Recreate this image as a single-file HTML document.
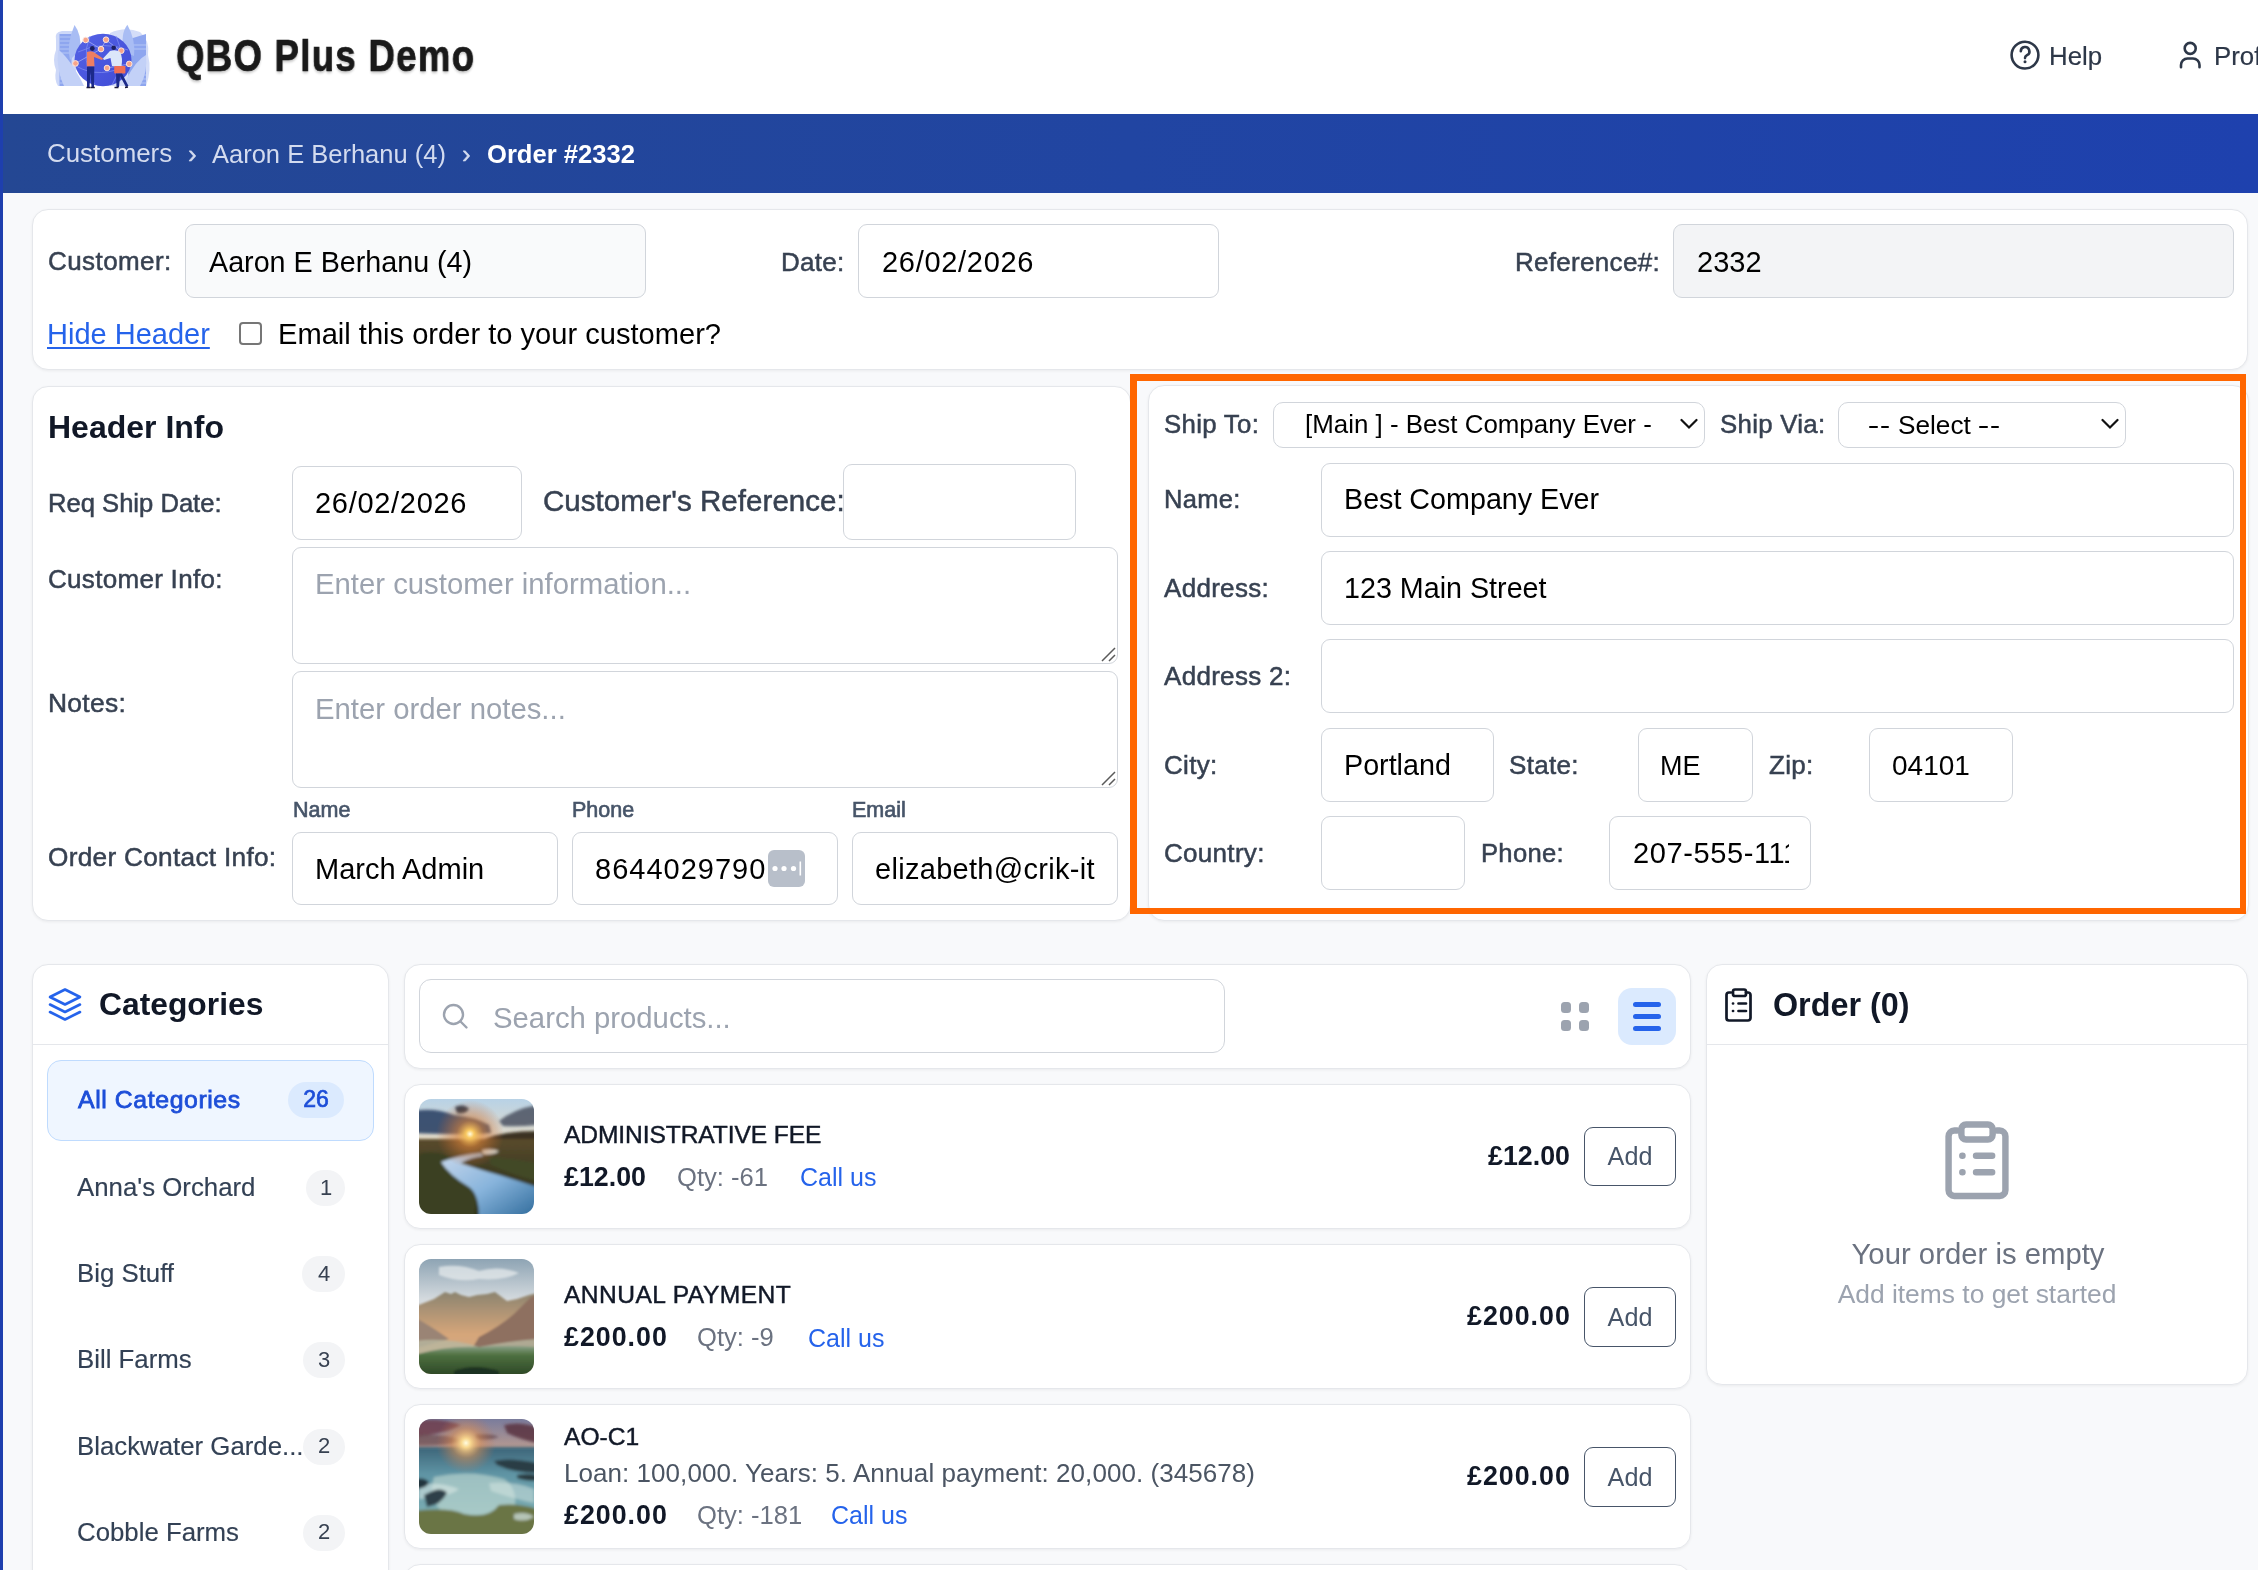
<!DOCTYPE html>
<html><head><meta charset="utf-8"><title>QBO Plus Demo - Order</title>
<style>
html,body{margin:0;padding:0;}
body{width:2258px;height:1570px;overflow:hidden;position:relative;background:#f8f9fb;font-family:"Liberation Sans",sans-serif;}
.t{position:absolute;line-height:1;white-space:nowrap;will-change:transform;}
.b{position:absolute;box-sizing:border-box;}
</style></head><body>
<div class="b" style="left:0px;top:0px;width:2258px;height:114px;background:#fff;"></div>
<div class="b" style="left:0px;top:114px;width:2258px;height:79px;background:linear-gradient(90deg,#244793 0%,#2145a2 50%,#1e41ae 100%);"></div>
<div class="b" style="left:0px;top:0px;width:3px;height:1570px;background:#1e3fae;z-index:50;"></div>
<svg class="b" style="left:50px;top:15px" width="105" height="80" viewBox="50 15 105 80">
<defs><linearGradient id="gl" x1="0" y1="0" x2="1" y2="1"><stop offset="0" stop-color="#5563e6"/><stop offset="1" stop-color="#3f4bd6"/></linearGradient></defs>
<path d="M56 40 Q54 32 62 31 L76 31 L76 86 L58 86 Q54 80 56 70 Q52 60 56 50 Z" fill="#cdd8f8"/>
<path d="M110 33 Q125 26 140 32 Q150 40 148 55 Q152 70 146 86 L110 86 Z" fill="#d4ddf8"/>
<rect x="59.5" y="34" width="12" height="52" fill="#8ea6ef"/>
<path d="M59.5 37 h12 M59.5 41 h12 M59.5 45 h12 M59.5 49 h12 M59.5 53 h12 M59.5 71 h12 M59.5 75 h12 M59.5 79 h12 M59.5 83 h12" stroke="#b4c6f6" stroke-width="1.2"/>
<path d="M128 39.5 L146 34 L146 86 L128 86 Z" fill="#8ea6ef"/>
<path d="M128 45 h18 M128 49 h18 M128 75 h18 M128 79 h18 M128 83 h18" stroke="#b4c6f6" stroke-width="1.2"/>
<path d="M74.5 25 Q82 35 80 50 L70 60 Q66 45 74.5 25 Z" fill="#a9bdf4"/>
<path d="M127.4 24.7 Q120 34 124 52 L134 56 Q136 40 127.4 24.7 Z" fill="#a9bdf4"/>
<path d="M58 50 Q66 54 80 78 L84 86 L64 86 Q56 70 58 50 Z" fill="#c3d1f7"/>
<path d="M146 55 Q136 60 126 80 L124 86 L140 86 Q148 72 146 55 Z" fill="#c3d1f7"/>
<ellipse cx="103" cy="60" rx="28.5" ry="26.2" fill="url(#gl)"/>
<path d="M78 52 Q103 40 128 50 M76 66 Q100 80 130 64 M90 36 Q80 60 95 85 M116 36 Q128 60 112 85" stroke="#7c8af0" stroke-width="0.8" fill="none"/>
<path d="M86 40 L101 49 L106 40 L121 51 M75.5 63.4 L101 49 M107 68 L129 64" stroke="#aab4f8" stroke-width="0.7" fill="none"/>
<g fill="#f7a48a" stroke="#fde4da" stroke-width="1">
<circle cx="85.7" cy="40" r="2.8"/><circle cx="106" cy="39.7" r="2.8"/><circle cx="101" cy="49.1" r="2.8"/><circle cx="121.3" cy="50.7" r="2.8"/>
<circle cx="75.5" cy="63.4" r="2.8"/><circle cx="107" cy="68" r="2.8"/><circle cx="129.2" cy="63.9" r="2.8"/></g>
<path d="M87 52 Q92 50 95 53 L103 58.5 L102 60 L94 57 L94.5 66.5 L86.7 66.5 Z" fill="#ef7e62"/>
<circle cx="92.3" cy="48.5" r="2.4" fill="#1d2060"/>
<path d="M87 66.5 L94.3 66.5 L94 87 L91.5 87 L90.5 72 L89.5 87 L87 87 Z" fill="#1c2a8a"/>
<path d="M86.5 87.5 h4 M90.8 87.5 h4" stroke="#1a1a3a" stroke-width="1.3"/>
<path d="M110 51 Q116 49 120 52 Q123 58 121.5 66 L112 66 L110.5 58 L104 60 L103 58.5 Z" fill="#dce7fa"/>
<circle cx="113.7" cy="47.8" r="2.3" fill="#1d2060"/>
<rect x="114.2" y="66" width="11.2" height="7.6" rx="1" fill="#ef6e55"/>
<path d="M116 73.6 L116.5 87 L119 87 L120 76 L126 87 L128.5 86 L122 73.6 Z" fill="#1c2a8a"/>
<path d="M114.5 87.5 h4 M125 87.5 l3 -0.5" stroke="#1a1a3a" stroke-width="1.3"/>
</svg>
<div class="t " style="left:176px;top:34.1px;font-size:44px;color:#1a1a1a;font-weight:700;letter-spacing:1.6px;transform:scaleX(0.83);transform-origin:0 0;-webkit-text-stroke:0.7px #1a1a1a;text-shadow:0 2px 3px rgba(0,0,0,0.25);">QBO Plus Demo</div>
<svg class="b" style="left:2006px;top:36px" width="40" height="40" viewBox="0 0 40 40" fill="none" stroke="#2d3748" stroke-width="2.6" stroke-linecap="round">
<circle cx="19" cy="19.1" r="13.4"/><path d="M14.8 15.3 a4.3 4.3 0 1 1 6.2 3.9 c-1.4 .8 -2 1.5 -2 2.9"/><circle cx="19" cy="25.8" r="1.5" fill="#2d3748" stroke="none"/></svg>
<div class="t " style="left:2049px;top:43.7px;font-size:25.8px;color:#2d3748;font-weight:400;-webkit-text-stroke:0.2px #2d3748;">Help</div>
<svg class="b" style="left:2174px;top:36px" width="34" height="40" viewBox="0 0 34 40" fill="none" stroke="#2d3748" stroke-width="2.6" stroke-linecap="round">
<circle cx="16.2" cy="12.4" r="5.5"/><path d="M7 31.3 v-2.3 a6.5 6.5 0 0 1 6.5 -6.5 h5.5 a6.5 6.5 0 0 1 6.5 6.5 v2.3"/></svg>
<div class="t " style="left:2214px;top:43.7px;font-size:25.8px;color:#2d3748;font-weight:400;-webkit-text-stroke:0.2px #2d3748;">Profile</div>
<div class="t " style="left:47px;top:141.3px;font-size:25.9px;color:#d3dbef;font-weight:400;">Customers</div>
<div class="t " style="left:188px;top:141.2px;font-size:26px;color:#d3dbef;font-weight:400;-webkit-text-stroke:0.4px #d3dbef;">›</div>
<div class="t " style="left:212px;top:141.6px;font-size:25.5px;color:#d3dbef;font-weight:400;">Aaron E Berhanu (4)</div>
<div class="t " style="left:462px;top:141.2px;font-size:26px;color:#d3dbef;font-weight:400;-webkit-text-stroke:0.4px #d3dbef;">›</div>
<div class="t " style="left:487px;top:141.5px;font-size:25.6px;color:#ffffff;font-weight:700;">Order #2332</div>
<div class="b" style="left:32px;top:209px;width:2216px;height:161px;background:#fff;border:1px solid #e5e7eb;border-radius:16px;box-shadow:0 1px 3px rgba(0,0,0,0.06);"></div>
<div class="t " style="left:47.5px;top:248.0px;font-size:26px;color:#374151;font-weight:400;-webkit-text-stroke:0.5px #374151;letter-spacing:0.42px;">Customer:</div>
<div class="b" style="left:185px;top:224px;width:461px;height:74px;background:#fff;border:1.5px solid #d1d5db;border-radius:9px;background:#f9fafb;"></div>
<div class="t " style="left:209px;top:248.0px;font-size:28.7px;color:#000;font-weight:400;">Aaron E Berhanu (4)</div>
<div class="t " style="left:781px;top:248.8px;font-size:26px;color:#374151;font-weight:400;-webkit-text-stroke:0.5px #374151;letter-spacing:0.3px;">Date:</div>
<div class="b" style="left:858px;top:224px;width:361px;height:74px;background:#fff;border:1.5px solid #d1d5db;border-radius:9px;"></div>
<div class="t " style="left:882px;top:248.1px;font-size:29px;color:#000;font-weight:400;letter-spacing:0.7px;">26/02/2026</div>
<div class="t " style="left:1515px;top:248.6px;font-size:26px;color:#374151;font-weight:400;-webkit-text-stroke:0.5px #374151;letter-spacing:0.3px;">Reference#:</div>
<div class="b" style="left:1673px;top:224px;width:561px;height:74px;background:#fff;border:1.5px solid #d1d5db;border-radius:9px;background:#f3f4f6;"></div>
<div class="t " style="left:1697px;top:248.1px;font-size:29px;color:#000;font-weight:400;">2332</div>
<div class="t " style="left:47px;top:320.4px;font-size:29px;color:#2563eb;font-weight:400;text-decoration:underline;text-decoration-thickness:2px;text-underline-offset:3px;">Hide Header</div>
<div class="b" style="left:239px;top:322px;width:23px;height:23px;background:#fff;border:2px solid #767676;border-radius:4px;"></div>
<div class="t " style="left:278px;top:320.3px;font-size:29.1px;color:#000;font-weight:400;">Email this order to your customer?</div>
<div class="b" style="left:32px;top:386px;width:1099px;height:535px;background:#fff;border:1px solid #e5e7eb;border-radius:16px;box-shadow:0 1px 3px rgba(0,0,0,0.06);"></div>
<div class="t " style="left:48px;top:411.4px;font-size:32px;color:#111827;font-weight:700;">Header Info</div>
<div class="t " style="left:48px;top:490.6px;font-size:25.6px;color:#374151;font-weight:400;-webkit-text-stroke:0.5px #374151;letter-spacing:0px;">Req Ship Date:</div>
<div class="b" style="left:292px;top:466px;width:230px;height:74px;background:#fff;border:1.5px solid #d1d5db;border-radius:9px;"></div>
<div class="t " style="left:315px;top:488.5px;font-size:29px;color:#000;font-weight:400;letter-spacing:0.7px;">26/02/2026</div>
<div class="t " style="left:543px;top:485.9px;font-size:29.5px;color:#374151;font-weight:400;-webkit-text-stroke:0.5px #374151;letter-spacing:0.05px;">Customer&#x27;s Reference:</div>
<div class="b" style="left:843px;top:464px;width:233px;height:76px;background:#fff;border:1.5px solid #d1d5db;border-radius:9px;"></div>
<div class="t " style="left:48px;top:565.9px;font-size:26.0px;color:#374151;font-weight:400;-webkit-text-stroke:0.5px #374151;letter-spacing:0.3px;">Customer Info:</div>
<div class="b" style="left:292px;top:547px;width:826px;height:117px;background:#fff;border:1.5px solid #d1d5db;border-radius:9px;"></div>
<div class="t " style="left:315px;top:568.8px;font-size:29.3px;color:#9ca3af;font-weight:400;">Enter customer information...</div>
<svg class="b" style="left:1099px;top:645px" width="18" height="18" viewBox="0 0 18 18" stroke="#5a5a5a" stroke-width="1.5"><path d="M3 16 L16 3 M10 16 L16 10"/></svg>
<div class="t " style="left:48px;top:690.1px;font-size:26.4px;color:#374151;font-weight:400;-webkit-text-stroke:0.5px #374151;letter-spacing:0.3px;">Notes:</div>
<div class="b" style="left:292px;top:671px;width:826px;height:117px;background:#fff;border:1.5px solid #d1d5db;border-radius:9px;"></div>
<div class="t " style="left:315px;top:694.2px;font-size:29.3px;color:#9ca3af;font-weight:400;">Enter order notes...</div>
<svg class="b" style="left:1099px;top:769px" width="18" height="18" viewBox="0 0 18 18" stroke="#5a5a5a" stroke-width="1.5"><path d="M3 16 L16 3 M10 16 L16 10"/></svg>
<div class="t " style="left:293px;top:800.1px;font-size:21.5px;color:#475569;font-weight:400;-webkit-text-stroke:0.65px #475569;">Name</div>
<div class="t " style="left:572px;top:800.1px;font-size:21.5px;color:#475569;font-weight:400;-webkit-text-stroke:0.65px #475569;">Phone</div>
<div class="t " style="left:852px;top:800.1px;font-size:21.5px;color:#475569;font-weight:400;-webkit-text-stroke:0.65px #475569;">Email</div>
<div class="t " style="left:48px;top:843.5px;font-size:26.2px;color:#374151;font-weight:400;-webkit-text-stroke:0.5px #374151;letter-spacing:0.3px;">Order Contact Info:</div>
<div class="b" style="left:292px;top:832px;width:266px;height:73px;background:#fff;border:1.5px solid #d1d5db;border-radius:9px;"></div>
<div class="t " style="left:315px;top:854.8px;font-size:29px;color:#000;font-weight:400;">March Admin</div>
<div class="b" style="left:572px;top:832px;width:266px;height:73px;background:#fff;border:1.5px solid #d1d5db;border-radius:9px;"></div>
<div class="t " style="left:595px;top:854.5px;font-size:29px;color:#000;font-weight:400;letter-spacing:1px;">8644029790</div>
<svg class="b" style="left:768px;top:850px" width="38" height="37" viewBox="0 0 38 37"><rect x="0" y="0" width="37" height="37" rx="6" fill="#b8bfca"/>
<circle cx="7" cy="18.5" r="2.6" fill="#fff"/><circle cx="16" cy="18.5" r="2.6" fill="#fff"/><circle cx="25.5" cy="18.5" r="2.6" fill="#fff"/><rect x="31.5" y="11.5" width="1.6" height="14" fill="#fff"/></svg>
<div class="b" style="left:852px;top:832px;width:266px;height:73px;background:#fff;border:1.5px solid #d1d5db;border-radius:9px;"></div>
<div class="t " style="left:875px;top:854.5px;font-size:29px;color:#000;font-weight:400;letter-spacing:0.3px;">elizabeth@crik-it</div>
<div class="b" style="left:1148px;top:385px;width:1101px;height:536px;background:#fff;border:1px solid #e5e7eb;border-radius:16px;box-shadow:0 1px 3px rgba(0,0,0,0.06);"></div>
<div class="t " style="left:1164px;top:412.4px;font-size:25.8px;color:#374151;font-weight:400;-webkit-text-stroke:0.5px #374151;letter-spacing:0.3px;">Ship To:</div>
<div class="b" style="left:1273px;top:402px;width:432px;height:46px;background:#fff;border:1.5px solid #d1d5db;border-radius:9px;border-radius:10px;"></div>
<div class="t " style="left:1305px;top:412.3px;font-size:25.9px;color:#000;font-weight:400;">[Main ] - Best Company Ever -</div>
<div class="t " style="left:1720px;top:412.4px;font-size:25.8px;color:#374151;font-weight:400;-webkit-text-stroke:0.5px #374151;letter-spacing:0.3px;">Ship Via:</div>
<div class="b" style="left:1838px;top:402px;width:288px;height:46px;background:#fff;border:1.5px solid #d1d5db;border-radius:9px;border-radius:10px;"></div>
<div class="t " style="left:1897.5px;top:411.8px;font-size:26.2px;color:#000;font-weight:400;">Select</div>
<div class="b" style="left:1869px;top:425.9px;width:8.599999999999909px;height:2.3000000000000114px;background:#000;border-radius:1px;"></div>
<div class="b" style="left:1880.6px;top:425.9px;width:8.599999999999909px;height:2.3000000000000114px;background:#000;border-radius:1px;"></div>
<div class="b" style="left:1979px;top:425.9px;width:8.599999999999909px;height:2.3000000000000114px;background:#000;border-radius:1px;"></div>
<div class="b" style="left:1990.6px;top:425.9px;width:8.599999999999909px;height:2.3000000000000114px;background:#000;border-radius:1px;"></div>
<svg class="b" style="left:1680px;top:418px" width="18" height="13" viewBox="0 0 18 13"><path d="M1.5 2 L9 9.5 L16.5 2" fill="none" stroke="#111" stroke-width="2.2" stroke-linecap="round"/></svg>
<svg class="b" style="left:2101px;top:418px" width="18" height="13" viewBox="0 0 18 13"><path d="M1.5 2 L9 9.5 L16.5 2" fill="none" stroke="#111" stroke-width="2.2" stroke-linecap="round"/></svg>
<div class="t " style="left:1164px;top:487.2px;font-size:25.5px;color:#374151;font-weight:400;-webkit-text-stroke:0.5px #374151;letter-spacing:0.3px;">Name:</div>
<div class="b" style="left:1321px;top:463px;width:913px;height:74px;background:#fff;border:1.5px solid #d1d5db;border-radius:9px;"></div>
<div class="t " style="left:1343.5px;top:485.4px;font-size:28.7px;color:#000;font-weight:400;">Best Company Ever</div>
<div class="t " style="left:1164px;top:574.7px;font-size:26px;color:#374151;font-weight:400;-webkit-text-stroke:0.5px #374151;letter-spacing:0.3px;">Address:</div>
<div class="b" style="left:1321px;top:551px;width:913px;height:74px;background:#fff;border:1.5px solid #d1d5db;border-radius:9px;"></div>
<div class="t " style="left:1343.5px;top:573.5px;font-size:28.7px;color:#000;font-weight:400;">123 Main Street</div>
<div class="t " style="left:1164px;top:663.0px;font-size:26px;color:#374151;font-weight:400;-webkit-text-stroke:0.5px #374151;letter-spacing:0.3px;">Address 2:</div>
<div class="b" style="left:1321px;top:639px;width:913px;height:74px;background:#fff;border:1.5px solid #d1d5db;border-radius:9px;"></div>
<div class="t " style="left:1164px;top:752.2px;font-size:26px;color:#374151;font-weight:400;-webkit-text-stroke:0.5px #374151;letter-spacing:0.3px;">City:</div>
<div class="b" style="left:1321px;top:728px;width:173px;height:74px;background:#fff;border:1.5px solid #d1d5db;border-radius:9px;"></div>
<div class="t " style="left:1343.5px;top:751.1px;font-size:28.7px;color:#000;font-weight:400;">Portland</div>
<div class="t " style="left:1509px;top:752.2px;font-size:26px;color:#374151;font-weight:400;-webkit-text-stroke:0.5px #374151;letter-spacing:0.3px;">State:</div>
<div class="b" style="left:1638px;top:728px;width:115px;height:74px;background:#fff;border:1.5px solid #d1d5db;border-radius:9px;"></div>
<div class="t " style="left:1660px;top:752.5px;font-size:27px;color:#000;font-weight:400;">ME</div>
<div class="t " style="left:1769px;top:752.2px;font-size:26px;color:#374151;font-weight:400;-webkit-text-stroke:0.5px #374151;letter-spacing:0.3px;">Zip:</div>
<div class="b" style="left:1869px;top:728px;width:144px;height:74px;background:#fff;border:1.5px solid #d1d5db;border-radius:9px;"></div>
<div class="t " style="left:1892px;top:751.7px;font-size:28px;color:#000;font-weight:400;">04101</div>
<div class="t " style="left:1164px;top:840.3px;font-size:26px;color:#374151;font-weight:400;-webkit-text-stroke:0.5px #374151;letter-spacing:0.3px;">Country:</div>
<div class="b" style="left:1321px;top:816px;width:144px;height:74px;background:#fff;border:1.5px solid #d1d5db;border-radius:9px;"></div>
<div class="t " style="left:1481px;top:840.6px;font-size:25.6px;color:#374151;font-weight:400;-webkit-text-stroke:0.5px #374151;letter-spacing:0.3px;">Phone:</div>
<div class="b" style="left:1609px;top:816px;width:202px;height:74px;border:1.5px solid #d1d5db;border-radius:9px;background:#fff;"></div>
<div class="b" style="left:1632px;top:820px;width:157px;height:66px;overflow:hidden;"><div class="t" style="left:1px;top:19.0px;font-size:29px;color:#000;letter-spacing:0.6px;">207-555-1111</div></div>
<div class="b" style="left:1130px;top:374px;width:1116px;height:540px;border-style:solid;border-color:#ff6600;border-width:7px 6px 6px 7px;z-index:40;"></div>
<div class="b" style="left:32px;top:964px;width:357px;height:646px;background:#fff;border:1px solid #e5e7eb;border-radius:16px;box-shadow:0 1px 3px rgba(0,0,0,0.06);"></div>
<svg class="b" style="left:46px;top:986px" width="38" height="38" viewBox="0 0 38 38" fill="none" stroke="#2563eb" stroke-width="2.6" stroke-linejoin="round" stroke-linecap="round">
<path d="M19 3.5 L34 11 L19 18.5 L4 11 Z"/><path d="M4 18.5 L19 26 L34 18.5"/><path d="M4 26 L19 33.5 L34 26"/></svg>
<div class="t " style="left:99px;top:989.2px;font-size:31.8px;color:#111827;font-weight:700;">Categories</div>
<div class="b" style="left:33px;top:1043.5px;width:355px;height:1.5px;background:#e5e7eb;"></div>
<div class="b" style="left:47px;top:1060px;width:327px;height:81px;background:#eff6ff;border:1.5px solid #bfdbfe;border-radius:14px;"></div>
<div class="t " style="left:78px;top:1087.6px;font-size:24.8px;color:#1d4ed8;font-weight:400;-webkit-text-stroke:0.8px #1d4ed8;letter-spacing:0.6px;">All Categories</div>
<div class="b" style="left:288px;top:1082px;width:56px;height:36px;background:#dbeafe;border-radius:18px;"></div>
<div class="t" style="left:-84px;width:800px;text-align:center;top:1088.3px;font-size:23px;color:#1d4ed8;font-weight:400;-webkit-text-stroke:0.7px #1d4ed8;">26</div>
<div class="t " style="left:77px;top:1175.1px;font-size:25.8px;color:#334155;font-weight:400;-webkit-text-stroke:0.15px #334155;">Anna&#x27;s Orchard</div>
<div class="b" style="left:306px;top:1169.9px;width:39px;height:36.0px;background:#f3f4f6;border-radius:18px;"></div>
<div class="t" style="left:-74.5px;width:800px;text-align:center;top:1176.8px;font-size:22px;color:#374151;font-weight:400;">1</div>
<div class="t " style="left:77px;top:1261.1px;font-size:25.8px;color:#334155;font-weight:400;-webkit-text-stroke:0.15px #334155;">Big Stuff</div>
<div class="b" style="left:302px;top:1255.9px;width:43px;height:36.0px;background:#f3f4f6;border-radius:18px;"></div>
<div class="t" style="left:-76.5px;width:800px;text-align:center;top:1262.8px;font-size:22px;color:#374151;font-weight:400;">4</div>
<div class="t " style="left:77px;top:1347.2px;font-size:25.8px;color:#334155;font-weight:400;-webkit-text-stroke:0.15px #334155;">Bill Farms</div>
<div class="b" style="left:303px;top:1342px;width:42px;height:36px;background:#f3f4f6;border-radius:18px;"></div>
<div class="t" style="left:-76.0px;width:800px;text-align:center;top:1348.9px;font-size:22px;color:#374151;font-weight:400;">3</div>
<div class="t " style="left:77px;top:1433.7px;font-size:25.8px;color:#334155;font-weight:400;-webkit-text-stroke:0.15px #334155;">Blackwater Garde...</div>
<div class="b" style="left:303px;top:1428.5px;width:42px;height:36.0px;background:#f3f4f6;border-radius:18px;"></div>
<div class="t" style="left:-76.0px;width:800px;text-align:center;top:1435.4px;font-size:22px;color:#374151;font-weight:400;">2</div>
<div class="t " style="left:77px;top:1519.7px;font-size:25.8px;color:#334155;font-weight:400;-webkit-text-stroke:0.15px #334155;">Cobble Farms</div>
<div class="b" style="left:303px;top:1514.5px;width:42px;height:36.0px;background:#f3f4f6;border-radius:18px;"></div>
<div class="t" style="left:-76.0px;width:800px;text-align:center;top:1521.4px;font-size:22px;color:#374151;font-weight:400;">2</div>
<div class="b" style="left:404px;top:964px;width:1287px;height:105px;background:#fff;border:1px solid #e5e7eb;border-radius:16px;box-shadow:0 1px 3px rgba(0,0,0,0.06);"></div>
<div class="b" style="left:419px;top:979px;width:806px;height:74px;background:#fff;border:1.5px solid #d1d5db;border-radius:9px;border-radius:12px;"></div>
<svg class="b" style="left:440px;top:1001px" width="32" height="32" viewBox="0 0 32 32" fill="none" stroke="#9ca3af" stroke-width="2.4" stroke-linecap="round">
<circle cx="13.5" cy="13.5" r="9.5"/><path d="M20.5 20.5 L26.5 26.5"/></svg>
<div class="t " style="left:493.4px;top:1002.6px;font-size:29.3px;color:#9ca3af;font-weight:400;">Search products...</div>
<div class="b" style="left:1561px;top:1002px;width:10px;height:11px;background:#9ca3af;border-radius:3.5px;"></div>
<div class="b" style="left:1579px;top:1002px;width:10px;height:11px;background:#9ca3af;border-radius:3.5px;"></div>
<div class="b" style="left:1561px;top:1020px;width:10px;height:11px;background:#9ca3af;border-radius:3.5px;"></div>
<div class="b" style="left:1579px;top:1020px;width:10px;height:11px;background:#9ca3af;border-radius:3.5px;"></div>
<div class="b" style="left:1618px;top:988px;width:58px;height:57px;background:#dbeafe;border-radius:14px;"></div>
<div class="b" style="left:1633px;top:1002.1px;width:28px;height:5.0px;background:#2563eb;border-radius:3px;"></div>
<div class="b" style="left:1633px;top:1013.9px;width:28px;height:5.0px;background:#2563eb;border-radius:3px;"></div>
<div class="b" style="left:1633px;top:1026.0px;width:28px;height:5.0px;background:#2563eb;border-radius:3px;"></div>
<div class="b" style="left:404px;top:1083.5px;width:1287px;height:145.0px;background:#fff;border:1px solid #e5e7eb;border-radius:16px;box-shadow:0 1px 3px rgba(0,0,0,0.06);"></div>
<svg class="b" style="left:419px;top:1098.5px;border-radius:12px;overflow:hidden" width="115" height="115" viewBox="0 0 115 115">
<defs><linearGradient id="s1sky" x1="0" y1="0" x2="0" y2="1"><stop offset="0" stop-color="#b8d2e6"/><stop offset="1" stop-color="#e6dcc8"/></linearGradient>
<radialGradient id="s1sun" cx="51" cy="35" r="34" gradientUnits="userSpaceOnUse"><stop offset="0" stop-color="#fffbe0"/><stop offset="0.12" stop-color="#f8c860"/><stop offset="0.4" stop-color="#d88038" stop-opacity="0.6"/><stop offset="1" stop-color="#c06030" stop-opacity="0"/></radialGradient>
<linearGradient id="s1riv" x1="0" y1="0" x2="1" y2="1"><stop offset="0" stop-color="#c8d8ec"/><stop offset="0.5" stop-color="#88b4dc"/><stop offset="1" stop-color="#2e6a9a"/></linearGradient>
<linearGradient id="s1gr" x1="0" y1="0" x2="0" y2="1"><stop offset="0" stop-color="#5a4a2c"/><stop offset="0.4" stop-color="#3e3c22"/><stop offset="1" stop-color="#2e3418"/></linearGradient>
<filter id="s1b"><feGaussianBlur stdDeviation="1.6"/></filter></defs>
<rect width="115" height="42" fill="url(#s1sky)"/>
<g filter="url(#s1b)">
<path d="M-5 12 Q15 8 35 16 Q55 18 70 26 L72 34 Q40 36 -5 34 Z" fill="#2c4466" opacity="0.9"/>
<path d="M36 8 Q45 4 50 10 Q46 16 38 14Z" fill="#2a3a50"/>
<path d="M80 22 Q95 10 118 6 L118 26 Q100 28 84 27Z" fill="#4a5262" opacity="0.85"/>
<path d="M65 40 Q85 32 118 32 L118 48 L65 48Z" fill="#3a3224"/>
<rect x="-5" y="40" width="125" height="80" fill="url(#s1gr)"/>
<path d="M0 55 Q20 50 40 62 Q55 68 60 80 L55 118 L-5 118 Z" fill="#3a4020"/>
<path d="M62 54 Q40 56 22 63 Q30 76 50 88 Q60 95 60 118 L118 118 L118 88 Q100 82 80 76 Q58 70 42 64 Q52 58 64 57Z" fill="url(#s1riv)"/>
<path d="M63 51 Q72 49 80 52 Q74 56 64 55Z" fill="#d8d8d0"/>
<path d="M70 58 Q95 60 118 64 L118 82 Q95 76 72 66Z" fill="#424a26"/>
</g>
<rect width="115" height="115" fill="url(#s1sun)"/>
</svg>
<div class="t " style="left:564px;top:1122.5px;font-size:24.6px;color:#111827;font-weight:400;-webkit-text-stroke:0.45px #111827;letter-spacing:-0.1px;">ADMINISTRATIVE FEE</div>
<div class="t " style="left:564px;top:1163.5px;font-size:26.8px;color:#111827;font-weight:700;letter-spacing:0px;">£12.00</div>
<div class="t " style="left:677px;top:1164.5px;font-size:25.6px;color:#6b7280;font-weight:400;">Qty: -61</div>
<div class="t " style="left:800px;top:1165.0px;font-size:25px;color:#2563eb;font-weight:400;">Call us</div>
<div class="t" style="right:688px;top:1142.8px;font-size:26.8px;color:#111827;font-weight:700;letter-spacing:0px;">£12.00</div>
<div class="b" style="left:1584px;top:1126.5px;width:92px;height:59.5px;background:#fff;border:1.5px solid #475569;border-radius:9px;"></div>
<div class="t" style="left:1230px;width:800px;text-align:center;top:1144.2px;font-size:25.2px;color:#475569;font-weight:400;">Add</div>
<div class="b" style="left:404px;top:1244px;width:1287px;height:145px;background:#fff;border:1px solid #e5e7eb;border-radius:16px;box-shadow:0 1px 3px rgba(0,0,0,0.06);"></div>
<svg class="b" style="left:419px;top:1259px;border-radius:12px;overflow:hidden" width="115" height="115" viewBox="0 0 115 115">
<defs><linearGradient id="m2sky" x1="0" y1="0" x2="0" y2="1"><stop offset="0" stop-color="#8ea4b4"/><stop offset="0.35" stop-color="#d4dade"/><stop offset="1" stop-color="#f2d8c6"/></linearGradient>
<linearGradient id="m2mt" x1="0" y1="0" x2="0" y2="1"><stop offset="0" stop-color="#8c8470"/><stop offset="0.5" stop-color="#d6a67a"/><stop offset="1" stop-color="#c8a888"/></linearGradient>
<linearGradient id="m2for" x1="0" y1="0" x2="0" y2="1"><stop offset="0" stop-color="#8aa088"/><stop offset="0.3" stop-color="#4e7040"/><stop offset="1" stop-color="#2a4424"/></linearGradient>
<filter id="m2b"><feGaussianBlur stdDeviation="1.2"/></filter></defs>
<rect width="115" height="115" fill="url(#m2sky)"/>
<g filter="url(#m2b)">
<path d="M20 8 Q40 4 60 12 Q80 6 100 14 Q85 22 60 20 Q40 24 20 16Z" fill="#e8ecee" opacity="0.7"/>
<path d="M-5 48 L15 40 L26 33 L32 35 L36 33 L42 36 L50 38 L58 36 L68 35 L76 33 L88 42 L98 40 L110 36 L118 34 L118 118 L-5 118Z" fill="url(#m2mt)"/>
<path d="M-5 58 Q10 66 30 80 L-5 90Z" fill="#9a8474"/>
<path d="M60 78 Q80 68 95 55 L112 38 L118 36 L118 95 L50 95Z" fill="#8e7060"/>
<path d="M-5 82 Q30 78 60 88 Q90 82 118 80 L118 100 L-5 100Z" fill="#b8b8a0" opacity="0.8"/>
<path d="M-5 96 Q30 86 60 88 Q90 86 118 88 L118 118 L-5 118Z" fill="url(#m2for)"/>
<path d="M35 112 Q55 104 80 112 L80 118 L35 118Z" fill="#1e3020"/>
</g>
</svg>
<div class="t " style="left:564px;top:1283.0px;font-size:24.6px;color:#111827;font-weight:400;-webkit-text-stroke:0.45px #111827;letter-spacing:0.45px;">ANNUAL PAYMENT</div>
<div class="t " style="left:564px;top:1324.0px;font-size:26.8px;color:#111827;font-weight:700;letter-spacing:1.0px;">£200.00</div>
<div class="t " style="left:696.5px;top:1325.0px;font-size:25.6px;color:#6b7280;font-weight:400;">Qty: -9</div>
<div class="t " style="left:808px;top:1325.5px;font-size:25px;color:#2563eb;font-weight:400;">Call us</div>
<div class="t" style="right:687.0px;top:1303.3px;font-size:26.8px;color:#111827;font-weight:700;letter-spacing:1.0px;">£200.00</div>
<div class="b" style="left:1584px;top:1287px;width:92px;height:59.5px;background:#fff;border:1.5px solid #475569;border-radius:9px;"></div>
<div class="t" style="left:1230px;width:800px;text-align:center;top:1304.7px;font-size:25.2px;color:#475569;font-weight:400;">Add</div>
<div class="b" style="left:404px;top:1404px;width:1287px;height:145px;background:#fff;border:1px solid #e5e7eb;border-radius:16px;box-shadow:0 1px 3px rgba(0,0,0,0.06);"></div>
<svg class="b" style="left:419px;top:1419px;border-radius:12px;overflow:hidden" width="115" height="115" viewBox="0 0 115 115">
<defs><linearGradient id="e3sky" x1="0" y1="0" x2="0" y2="1"><stop offset="0" stop-color="#7a7c9c"/><stop offset="1" stop-color="#b89a90"/></linearGradient>
<radialGradient id="e3sun" cx="47" cy="24" r="30" gradientUnits="userSpaceOnUse"><stop offset="0" stop-color="#fffce0"/><stop offset="0.15" stop-color="#f8d890"/><stop offset="0.5" stop-color="#e09050" stop-opacity="0.5"/><stop offset="1" stop-color="#c07050" stop-opacity="0"/></radialGradient>
<linearGradient id="e3sea" x1="0" y1="0" x2="0" y2="1"><stop offset="0" stop-color="#3c6478"/><stop offset="0.3" stop-color="#5f94a4"/><stop offset="1" stop-color="#8cbcbc"/></linearGradient>
<filter id="e3b"><feGaussianBlur stdDeviation="1.5"/></filter></defs>
<rect width="115" height="30" fill="url(#e3sky)"/>
<g filter="url(#e3b)">
<path d="M-5 2 Q20 -2 42 6 Q30 14 -5 18Z" fill="#6a3a48" opacity="0.8"/>
<path d="M-5 16 Q25 14 45 22 Q20 28 -5 26Z" fill="#6a4a50" opacity="0.7"/>
<path d="M85 6 Q100 2 118 8 L118 24 Q100 20 88 14Z" fill="#5a3440" opacity="0.85"/>
<path d="M55 16 Q70 14 80 18 Q68 22 58 20Z" fill="#5a4048" opacity="0.7"/>
<rect x="-5" y="28" width="125" height="90" fill="url(#e3sea)"/>
<path d="M15 58 Q50 50 85 60 Q100 70 95 92 Q60 102 25 94 Q8 80 15 58Z" fill="#c4dcd4" opacity="0.6"/><path d="M0 66 Q20 62 40 70 Q30 78 0 80Z" fill="#d8e8e4" opacity="0.6"/><path d="M70 64 Q95 62 115 70 L115 84 Q95 80 72 72Z" fill="#d8e8e4" opacity="0.5"/>
<path d="M75 42 Q90 38 118 44 L118 54 Q95 54 78 46Z" fill="#2a3c44"/>
<path d="M98 56 Q110 54 118 56 L118 62 Q105 62 98 59Z" fill="#2a3a40"/>
<path d="M-5 60 Q8 58 10 64 Q6 70 -5 70Z" fill="#24343e"/>
<path d="M5 76 Q22 66 28 74 Q22 86 8 88Z" fill="#2e404a"/>
<path d="M-5 92 Q30 88 45 95 Q70 100 80 86 Q100 84 118 90 L118 118 L-5 118Z" fill="#6a7444"/>
<path d="M95 95 Q108 92 115 98 Q105 104 95 100Z" fill="#c8d8d4" opacity="0.8"/>
</g>
<rect width="115" height="115" fill="url(#e3sun)"/>
</svg>
<div class="t " style="left:564px;top:1425.1px;font-size:24.6px;color:#111827;font-weight:400;-webkit-text-stroke:0.45px #111827;letter-spacing:0.0px;">AO-C1</div>
<div class="t " style="left:564px;top:1459.8px;font-size:26px;color:#4b5563;font-weight:400;letter-spacing:0.05px;">Loan: 100,000. Years: 5. Annual payment: 20,000. (345678)</div>
<div class="t " style="left:564px;top:1501.9px;font-size:26.8px;color:#111827;font-weight:700;letter-spacing:1.0px;">£200.00</div>
<div class="t " style="left:696.5px;top:1502.9px;font-size:25.6px;color:#6b7280;font-weight:400;">Qty: -181</div>
<div class="t " style="left:831.4px;top:1503.4px;font-size:25px;color:#2563eb;font-weight:400;">Call us</div>
<div class="t" style="right:687.0px;top:1463.3px;font-size:26.8px;color:#111827;font-weight:700;letter-spacing:1.0px;">£200.00</div>
<div class="b" style="left:1584px;top:1447px;width:92px;height:59.5px;background:#fff;border:1.5px solid #475569;border-radius:9px;"></div>
<div class="t" style="left:1230px;width:800px;text-align:center;top:1464.7px;font-size:25.2px;color:#475569;font-weight:400;">Add</div>
<div class="b" style="left:404px;top:1564px;width:1287px;height:145px;background:#fff;border:1px solid #e5e7eb;border-radius:16px;box-shadow:0 1px 3px rgba(0,0,0,0.06);"></div>
<div class="b" style="left:1706px;top:964px;width:542px;height:421px;background:#fff;border:1px solid #e5e7eb;border-radius:16px;box-shadow:0 1px 3px rgba(0,0,0,0.06);"></div>
<svg class="b" style="left:1722px;top:985px" width="34" height="40" viewBox="0 0 34 40" fill="none" stroke="#111827" stroke-width="2.7" stroke-linecap="round" stroke-linejoin="round">
<path d="M9 7.5 H7 a2.5 2.5 0 0 0 -2.5 2.5 V33 a2.5 2.5 0 0 0 2.5 2.5 H26 a2.5 2.5 0 0 0 2.5 -2.5 V10 a2.5 2.5 0 0 0 -2.5 -2.5 H24"/>
<rect x="11" y="4.5" width="13" height="6.5" rx="2"/>
<path d="M11 18.5 h0.1 M16.5 18.5 h7.5 M11 26 h0.1 M16.5 26 h7.5"/></svg>
<div class="t " style="left:1773px;top:988.6px;font-size:32.3px;color:#111827;font-weight:700;">Order (0)</div>
<div class="b" style="left:1707px;top:1043.5px;width:540px;height:1.5px;background:#e5e7eb;"></div>
<svg class="b" style="left:1941px;top:1116px" width="72" height="86" viewBox="0 0 76 90" fill="none" stroke="#9ca3af" stroke-width="6.8" stroke-linecap="round" stroke-linejoin="round">
<path d="M17 15 H14 a6 6 0 0 0 -6 6 V78 a6 6 0 0 0 6 6 H62 a6 6 0 0 0 6 -6 V21 a6 6 0 0 0 -6 -6 H59"/>
<rect x="21.5" y="8.5" width="33" height="16" rx="5"/>
<path d="M22.5 41.5 h0.2 M37 41.5 h17 M22.5 59 h0.2 M37 59 h17"/></svg>
<div class="t" style="left:1577.5px;width:800px;text-align:center;top:1238.8px;font-size:29.3px;color:#6b7280;font-weight:400;">Your order is empty</div>
<div class="t" style="left:1577px;width:800px;text-align:center;top:1280.5px;font-size:26.4px;color:#9ca3af;font-weight:400;">Add items to get started</div>
</body></html>
